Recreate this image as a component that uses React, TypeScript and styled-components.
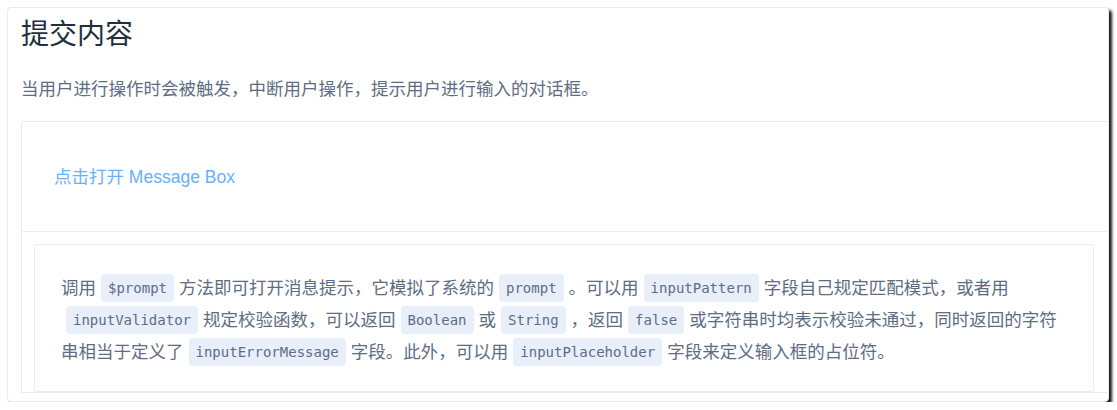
import React from "react";
import styled, { createGlobalStyle } from "styled-components";

const GlobalStyle = createGlobalStyle`
  html, body {
    margin: 0;
    padding: 0;
    background: #ffffff;
  }
  body {
    font-family: "Liberation Sans", "Noto Sans CJK SC", sans-serif;
  }
`;

const Frame = styled.div`
  box-sizing: border-box;
  margin: 7px 0 0 7px;
  width: 1102px;
  height: 395px;
  border: 1px solid #ececec;
  border-radius: 4px;
  box-shadow: 3px 3px 3px rgba(0, 0, 0, 0.9);
  background: #ffffff;
  overflow: hidden;
  padding: 5px 0 0 13px;
  display: flex;
  flex-direction: column;
  gap: 20px;
`;

const Title = styled.h3`
  margin: 0;
  font-size: 28px;
  line-height: 44px;
  font-weight: 400;
  color: #1f2f3d;
`;

const Lead = styled.p`
  margin: 0;
  font-size: 17.5px;
  line-height: 24px;
  color: #5e6d82;
`;

const DemoCard = styled.div`
  border: 1px solid #ebebeb;
  border-right: none;
  border-radius: 3px 0 0 0;
  display: flex;
  flex-direction: column;
`;

const Source = styled.div`
  height: 109px;
  padding: 0 32px;
  display: flex;
  align-items: center;
  border-bottom: 1px solid #eaeefb;
`;

const LinkButton = styled.button`
  border: none;
  background: none;
  padding: 0;
  font-family: "Liberation Sans", "Noto Sans CJK SC", sans-serif;
  font-size: 17.5px;
  line-height: 24px;
  color: #66b1ff;
  cursor: pointer;
`;

const Meta = styled.div`
  padding: 12px 14px 0 12px;
`;

const Description = styled.div`
  border: 1px solid #ebebeb;
  border-radius: 3px;
  padding: 27px 25px 23px 26px;
  font-size: 17.5px;
  line-height: 32px;
  color: #5e6d82;
`;

const Code = styled.code`
  display: inline-block;
  height: 28px;
  line-height: 28px;
  vertical-align: top;
  margin: 2px 5px;
  padding: 0 7px;
  border-radius: 4px;
  background: #e8eefa;
  color: #5e6d82;
  font-family: "DejaVu Sans Mono", "Liberation Mono", monospace;
  font-size: 14px;
`;

export default function App() {
  return (
    <>
      <GlobalStyle />
      <Frame>
        <Title>提交内容</Title>
        <Lead>当用户进行操作时会被触发，中断用户操作，提示用户进行输入的对话框。</Lead>
        <DemoCard>
          <Source>
            <LinkButton>点击打开 Message Box</LinkButton>
          </Source>
          <Meta>
            <Description>
              调用<Code>$prompt</Code>方法即可打开消息提示，它模拟了系统的<Code>prompt</Code>。可以用<Code>inputPattern</Code>字段自己规定匹配模式，或者用<Code>inputValidator</Code>规定校验函数，可以返回<Code>Boolean</Code>或<Code>String</Code>，返回<Code>false</Code>或字符串时均表示校验未通过，同时返回的字符串相当于定义了<Code>inputErrorMessage</Code>字段。此外，可以用<Code>inputPlaceholder</Code>字段来定义输入框的占位符。
            </Description>
          </Meta>
        </DemoCard>
      </Frame>
    </>
  );
}
